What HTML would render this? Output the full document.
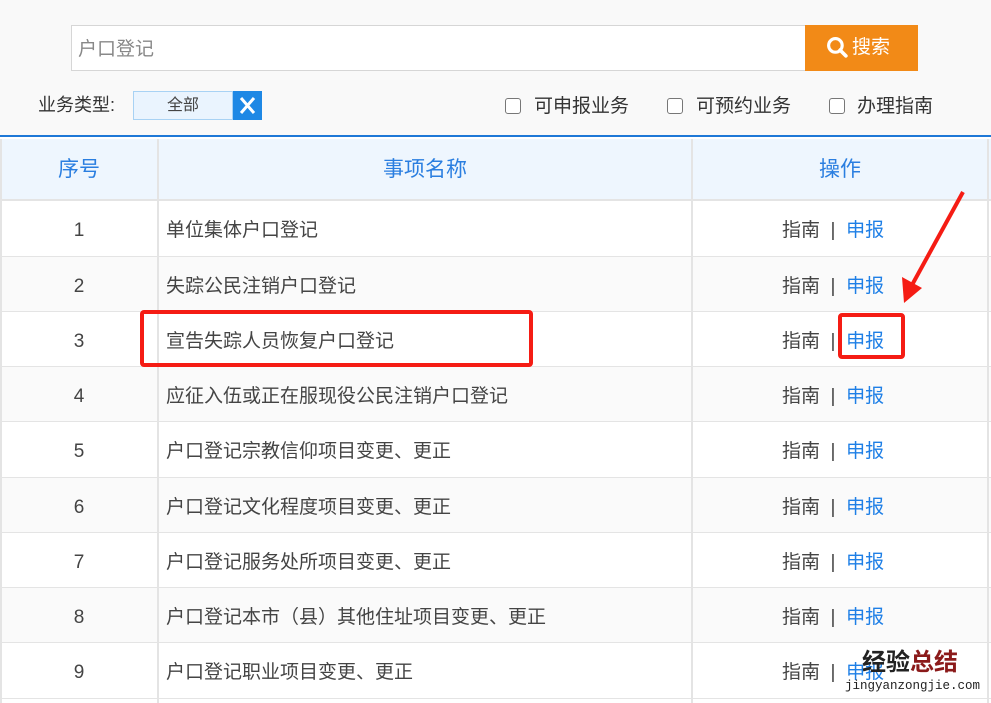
<!DOCTYPE html>
<html><head><meta charset="utf-8"><style>
*{margin:0;padding:0;box-sizing:border-box}
body{width:991px;height:703px;overflow:hidden;background:#fff;font-family:"Liberation Sans","Noto Sans CJK SC",sans-serif;position:relative;color:#444}
.top{position:absolute;left:0;top:0;width:991px;height:137px;background:#f9f9f9;border-bottom:2px solid #1e78d7}
.inp{position:absolute;left:71px;top:25px;width:736px;height:46px;background:#fff;border:1px solid #d6d6d6;font-size:19px;color:#888;line-height:44px;padding:2px 0 0 6px}
.btn{position:absolute;left:805px;top:25px;width:113px;height:46px;background:#f28a17;color:#fff;font-size:19px;line-height:46px;padding-left:47px}
.abs{position:absolute}
.lbl{left:38px;top:92px;font-size:18px;color:#333;line-height:26px}
.sel{left:133px;top:91px;width:100px;height:29px;background:#eaf4fe;border:1px solid #a8d2f4;font-size:16px;color:#444;text-align:center;line-height:27px}
.x{left:233px;top:91px;width:29px;height:29px;background:#1e88e5}
.cb{top:98px;width:16px;height:16px;border:1.5px solid #777;border-radius:3px;background:#fff}
.ct{top:94px;font-size:19px;color:#333;line-height:26px}
.hdr{position:absolute;left:0;top:139px;width:991px;height:62px;background:#eef6fe;border-bottom:2px solid #e4e4e4;color:#2a7ee0;font-size:21px;line-height:62px}
.row{position:absolute;left:0;width:991px;border-bottom:1px solid #e4e4e4;font-size:19px;color:#444;line-height:55px}
.c1{position:absolute;left:0;top:2px;width:158px;text-align:center}
.c2{position:absolute;left:166px;top:2px}
.c3{position:absolute;left:782px;top:2px;white-space:pre}
.vl{position:absolute;top:139px;width:2px;height:564px;background:#e4e4e4}
.b{color:#1e7fe6}
</style></head><body>
<div class="top">
<div class="inp">户口登记</div>
<div class="btn">搜索</div>
<svg class="abs" style="left:826px;top:36px" width="23" height="23" viewBox="0 0 22 22"><circle cx="9" cy="9" r="6.5" fill="none" stroke="#fff" stroke-width="3"/><path d="M13.5 13.5L19 19" stroke="#fff" stroke-width="3.5" stroke-linecap="round"/></svg>
<div class="abs lbl">业务类型:</div>
<div class="abs sel">全部</div>
<svg class="abs x" viewBox="0 0 29 29"><path d="M8 7L21 22M21 7L8 22" stroke="#fff" stroke-width="3"/></svg>
<div class="abs cb" style="left:505px"></div><div class="abs ct" style="left:534px">可申报业务</div>
<div class="abs cb" style="left:667px"></div><div class="abs ct" style="left:696px">可预约业务</div>
<div class="abs cb" style="left:829px"></div><div class="abs ct" style="left:857px">办理指南</div>
</div>
<div class="hdr">
<div class="abs" style="left:0;width:158px;text-align:center;top:0">序号</div>
<div class="abs" style="left:158px;width:534px;text-align:center;top:0">事项名称</div>
<div class="abs" style="left:692px;width:296px;text-align:center;top:0">操作</div>
</div>
<div class="row" style="top:201px;height:56px;background:#fff"><div class="c1">1</div><div class="c2">单位集体户口登记</div><div class="c3">指南  |  <span class="b">申报</span></div></div>
<div class="row" style="top:257px;height:55px;background:#fafafa"><div class="c1">2</div><div class="c2">失踪公民注销户口登记</div><div class="c3">指南  |  <span class="b">申报</span></div></div>
<div class="row" style="top:312px;height:55px;background:#fff"><div class="c1">3</div><div class="c2">宣告失踪人员恢复户口登记</div><div class="c3">指南  |  <span class="b">申报</span></div></div>
<div class="row" style="top:367px;height:55px;background:#fafafa"><div class="c1">4</div><div class="c2">应征入伍或正在服现役公民注销户口登记</div><div class="c3">指南  |  <span class="b">申报</span></div></div>
<div class="row" style="top:422px;height:56px;background:#fff"><div class="c1">5</div><div class="c2">户口登记宗教信仰项目变更、更正</div><div class="c3">指南  |  <span class="b">申报</span></div></div>
<div class="row" style="top:478px;height:55px;background:#fafafa"><div class="c1">6</div><div class="c2">户口登记文化程度项目变更、更正</div><div class="c3">指南  |  <span class="b">申报</span></div></div>
<div class="row" style="top:533px;height:55px;background:#fff"><div class="c1">7</div><div class="c2">户口登记服务处所项目变更、更正</div><div class="c3">指南  |  <span class="b">申报</span></div></div>
<div class="row" style="top:588px;height:55px;background:#fafafa"><div class="c1">8</div><div class="c2">户口登记本市（县）其他住址项目变更、更正</div><div class="c3">指南  |  <span class="b">申报</span></div></div>
<div class="row" style="top:643px;height:56px;background:#fff"><div class="c1">9</div><div class="c2">户口登记职业项目变更、更正</div><div class="c3">指南  |  <span class="b">申报</span></div></div>
<div class="vl" style="left:0"></div>
<div class="vl" style="left:157px"></div>
<div class="vl" style="left:691px"></div>
<div class="vl" style="left:987px"></div>
<div class="abs" style="left:140px;top:310px;width:393px;height:57px;border:4px solid #f51c14;border-radius:4px"></div>
<div class="abs" style="left:838px;top:313px;width:67px;height:46px;border:4px solid #f51c14;border-radius:4px"></div>
<svg class="abs" style="left:890px;top:185px" width="80" height="125" viewBox="0 0 80 125"><path d="M73 7L22 100" stroke="#f51c14" stroke-width="4"/><path d="M14 118L12 92L32 103Z" fill="#f51c14"/></svg>
<div class="abs" style="left:862px;top:648px;font-size:24px;font-weight:bold;color:#222;line-height:30px">经验<span style="color:#8b1a1a">总结</span></div>
<div class="abs" style="left:845px;top:678px;font-size:12.5px;font-family:'Liberation Mono',monospace;color:#222;line-height:16px">jingyanzongjie.com</div>
</body></html>
